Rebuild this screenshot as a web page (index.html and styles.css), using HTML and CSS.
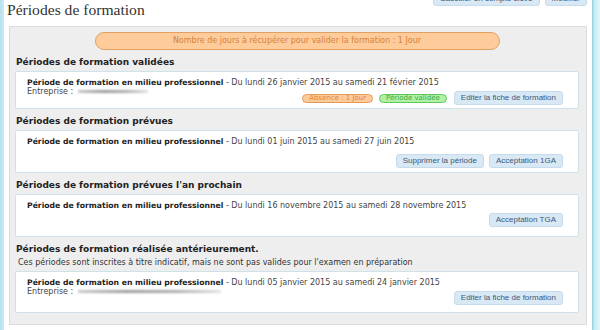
FILE: index.html
```html
<!DOCTYPE html>
<html lang="fr">
  <head>
    <meta charset="UTF-8" />
    <title>Périodes de formation</title>
    <link rel="stylesheet" href="styles.css">
  </head>
  <body>
    <div class="side side-left"></div>
    <div class="page">
      <div class="header">
        <h1 class="page-title">Périodes de formation</h1>
        <div class="top-actions">
          <button class="btn">Basculer en compte élève</button>
          <button class="btn">Modifier</button>
        </div>
      </div>

      <div class="panel">
        <div class="notice">Nombre de jours à récupérer pour valider la formation : 1 Jour</div>

        <h2 class="section-title">Périodes de formation validées</h2>
        <div class="card card-tight">
          <div class="card-line"><b>Période de formation en milieu professionnel</b> - Du lundi 26 janvier 2015 au samedi 21 février 2015</div>
          <div class="card-row">
            <div class="company">Entreprise : <span class="masked masked-short"></span></div>
            <div class="card-actions card-actions-mid">
              <span class="tag tag-absence">Absence : 1 Jour</span>
              <span class="tag tag-valid">Période validée</span>
              <button class="btn btn-spaced">Editer la fiche de formation</button>
            </div>
          </div>
        </div>

        <h2 class="section-title">Périodes de formation prévues</h2>
        <div class="card card-low">
          <div class="card-line"><b>Période de formation en milieu professionnel</b> - Du lundi 01 juin 2015 au samedi 27 juin 2015</div>
          <div class="card-row">
            <div class="card-actions card-actions-low">
              <button class="btn">Supprimer la période</button>
              <button class="btn">Acceptation 1GA</button>
            </div>
          </div>
        </div>

        <h2 class="section-title">Périodes de formation prévues l'an prochain</h2>
        <div class="card">
          <div class="card-line"><b>Période de formation en milieu professionnel</b> - Du lundi 16 novembre 2015 au samedi 28 novembre 2015</div>
          <div class="card-row">
            <div class="card-actions">
              <button class="btn">Acceptation TGA</button>
            </div>
          </div>
        </div>

        <h2 class="section-title">Périodes de formation réalisée antérieurement.</h2>
        <p class="section-note">Ces périodes sont inscrites à titre indicatif, mais ne sont pas valides pour l'examen en préparation</p>
        <div class="card card-last">
          <div class="card-line"><b>Période de formation en milieu professionnel</b> - Du lundi 05 janvier 2015 au samedi 24 janvier 2015</div>
          <div class="card-row">
            <div class="company">Entreprise : <span class="masked masked-long"></span></div>
            <div class="card-actions card-actions-mid">
              <button class="btn">Editer la fiche de formation</button>
            </div>
          </div>
        </div>
      </div>
    </div>
    <div class="side side-right"></div>
  </body>
</html>
```

FILE: styles.css
```css
* {
    margin: 0;
    padding: 0;
    box-sizing: border-box;
}

body {
    display: flex;
    min-height: 330px;
    overflow: hidden;
    font-family: 'DejaVu Sans', Verdana, sans-serif;
    font-size: 8px;
    color: #333;
    background: #fff;
}

.side-left {
    width: 4px;
    background: linear-gradient(90deg, #b7dfef, #cbe9f5);
}

.side-right {
    width: 8px;
    background: linear-gradient(90deg, #9dd6e1 0, #9dd6e1 1px, #c2ebf1 2px, #e3f6f9 100%);
}

.page {
    flex: 1;
    background: #fff;
}

.header {
    display: flex;
    justify-content: space-between;
    align-items: flex-start;
    margin-top: -8px;
}

.page-title {
    margin: 9px 0 0 3px;
    font-family: 'Liberation Serif', 'Times New Roman', serif;
    font-size: 15.6px;
    line-height: 17px;
    font-weight: normal;
    color: #333;
}

.top-actions {
    display: flex;
    gap: 5px;
    margin-right: 5px;
}

.btn {
    height: 14px;
    padding: 0 6px;
    border: 1px solid #c6dbeb;
    border-radius: 3px;
    background: #d8e8f5;
    font-family: 'Liberation Sans', Arial, sans-serif;
    font-size: 8px;
    line-height: 12px;
    color: #3f5875;
    white-space: nowrap;
}

.btn-spaced {
    margin-left: 1px;
}

.panel {
    margin: 8px 5px 0 5px;
    padding: 5px 7px 11px 5px;
    background: #eeeeee;
    border: 1px solid #dcdcdc;
}

.notice {
    width: 405px;
    height: 18px;
    margin: 0 auto;
    border: 1px solid #e2a062;
    border-radius: 9px;
    background: #fecb9a;
    color: #d4823e;
    text-align: center;
    line-height: 16px;
}

.section-title {
    margin: 7px 0 4px 1px;
    font-size: 9px;
    line-height: 10px;
    font-weight: bold;
    color: #222;
}

.section-note {
    margin: 4px 0 3px 3px;
    line-height: 10px;
    color: #333;
}

.card {
    padding: 6px 15px 9px 11px;
    background: #fff;
    border: 1px solid #cfe2e9;
    border-radius: 2px;
}

.card-tight {
    padding-bottom: 3px;
}

.card-low {
    padding-bottom: 4px;
}

.card-last {
    padding-bottom: 7px;
}

.card-line {
    line-height: 9px;
    color: #444;
    white-space: nowrap;
}

.card-line b {
    font-size: 7.7px;
    color: #222;
}

.card-row {
    display: flex;
    align-items: flex-start;
}

.company {
    line-height: 9px;
    color: #444;
}

.masked {
    display: inline-block;
    height: 3px;
    margin-left: 2px;
    vertical-align: middle;
    background: linear-gradient(90deg, #c8c8c8, #9c9c9c 35%, #b0b0b0 70%, #e2e2e2);
    filter: blur(0.8px);
}

.masked-short {
    width: 70px;
}

.masked-long {
    width: 143px;
}

.card-actions {
    display: flex;
    align-items: center;
    gap: 6px;
    margin: 3px 0 0 auto;
}

.card-actions-mid {
    margin-top: 4px;
}

.card-actions-low {
    margin-top: 8px;
    gap: 5px;
}

.tag {
    height: 9px;
    padding: 0 6px;
    border-radius: 5px;
    border: 1px solid;
    font-size: 7px;
    line-height: 7px;
}

.tag-absence {
    background: #fecb9a;
    border-color: #e39a5a;
    color: #e2843a;
}

.tag-valid {
    background: #b2f0a6;
    border-color: #5fc85a;
    color: #3eaa3a;
}
```
